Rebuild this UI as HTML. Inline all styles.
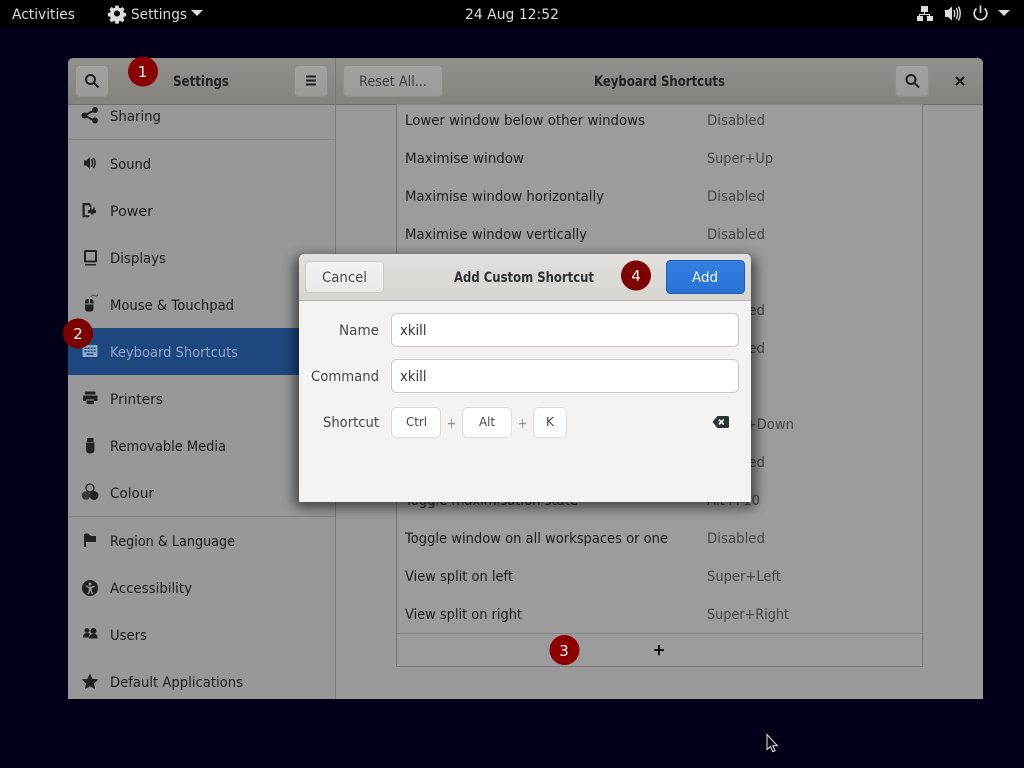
<!DOCTYPE html>
<html><head><meta charset="utf-8"><title>Settings</title>
<style>
html,body{margin:0;padding:0;width:1024px;height:768px;overflow:hidden;background:#000018}
svg{display:block}
text{font-family:"DejaVu Sans","Liberation Sans",sans-serif;font-size:14.5px;fill:#1c1c1c}
.top{fill:#dcdcdc;font-size:14.5px}
.s{fill:#1c1c1c}
.v{fill:#464646}
.b{font-weight:bold;fill:#222}
.d{fill:#2e3436}
.l{fill:#44484a}
.ic{fill:#222}
</style></head><body>
<svg width="1024" height="768" viewBox="0 0 1024 768" xmlns="http://www.w3.org/2000/svg">
<defs>
<linearGradient id="hb" x1="0" y1="0" x2="0" y2="1"><stop offset="0" stop-color="#92918c"/><stop offset="1" stop-color="#83827d"/></linearGradient>
<linearGradient id="btn" x1="0" y1="0" x2="0" y2="1"><stop offset="0" stop-color="#a3a29e"/><stop offset="1" stop-color="#9b9a96"/></linearGradient>
<linearGradient id="dh" x1="0" y1="0" x2="0" y2="1"><stop offset="0" stop-color="#e2e0dc"/><stop offset="1" stop-color="#d8d5d0"/></linearGradient>
<linearGradient id="dbtn" x1="0" y1="0" x2="0" y2="1"><stop offset="0" stop-color="#f4f3f1"/><stop offset="1" stop-color="#eae8e5"/></linearGradient>
<linearGradient id="add" x1="0" y1="0" x2="0" y2="1"><stop offset="0" stop-color="#3280e0"/><stop offset="1" stop-color="#2872d6"/></linearGradient>
<filter id="sh" x="-15%" y="-20%" width="130%" height="140%"><feGaussianBlur stdDeviation="6"/></filter>
</defs>

<rect width="1024" height="768" fill="#000018"/>
<rect width="1024" height="27" fill="#000"/>

<!-- top bar -->
<text class="top" x="12" y="19" textLength="63" lengthAdjust="spacingAndGlyphs">Activities</text>
<g fill="#dcdcdc" transform="translate(117,13.5)">
<path d="M-1.6-8h3.2l.4 2.2 1.5.6 1.9-1.3 2.2 2.2-1.3 1.9.6 1.5 2.2.4v3.2l-2.2.4-.6 1.500 1.3 1.900-2.200 2.200-1.900-1.300-1.500.6-.4 2.200h-3.200l-.4-2.200-1.500-.6-1.900 1.300-2.200-2.200 1.300-1.900-.6-1.500-2.200-.4v-3.200l2.200-.4.6-1.500-1.300-1.900 2.200-2.200 1.900 1.300 1.500-.6zM0-3a3 3 0 1 0 0 6 3 3 0 0 0 0-6z" fill-rule="evenodd"/>
</g>
<text class="top" x="131" y="19" textLength="56" lengthAdjust="spacingAndGlyphs">Settings</text>
<path d="M191 10h12l-6 6z" fill="#dcdcdc"/>
<text class="top" x="465" y="19" textLength="94" lengthAdjust="spacingAndGlyphs">24 Aug 12:52</text>
<!-- network -->
<g fill="#dcdcdc"><rect x="921" y="6" width="7" height="6"/><rect x="917" y="16" width="6" height="5"/><rect x="927" y="16" width="6" height="5"/><path d="M924 12h1v2h5v2h-1v-1h-9v1h-1v-2h5z"/></g>
<!-- volume -->
<path d="M945 10h3l4-3.500v14l-4-3.500h-3z" fill="#dcdcdc"/>
<path d="M954 10q1.500 3.500 0 7M956.300 8q2.700 5.500 0 11M958.500 6.500q3.500 7 0 14" fill="none" stroke="#dcdcdc" stroke-width="1.400"/>
<!-- power -->
<path d="M976.500 8.500a6.300 6.300 0 1 0 8 0M980.500 5.500v7.500" fill="none" stroke="#dcdcdc" stroke-width="1.700"/>
<path d="M998 10h12l-6 6z" fill="#dcdcdc"/>

<!-- window -->
<path d="M68 699V64q0-6 6-6h903q6 0 6 6v635z" fill="#9a9a9a"/>
<path d="M68 104V64q0-6 6-6h903q6 0 6 6v40z" fill="url(#hb)"/>
<rect x="68" y="104" width="915" height="1" fill="#6e6d69"/>
<rect x="335" y="58" width="1" height="641" fill="#7a7a77"/>

<!-- header buttons -->
<rect x="75.500" y="65.500" width="33" height="31" rx="4" fill="url(#btn)" stroke="#8d8c88"/>
<g fill="none" stroke="#1e1e1e" stroke-width="2"><circle cx="90.500" cy="79.500" r="4.500"/><path d="M94 83l4.500 4.500"/></g>
<text class="b" x="173" y="86" textLength="56" lengthAdjust="spacingAndGlyphs">Settings</text>
<rect x="294.500" y="65.500" width="33" height="31" rx="4" fill="url(#btn)" stroke="#8d8c88"/>
<path d="M306 75.500h10v2h-10zM306 79.500h10v2h-10zM306 83.500h10v2h-10z" fill="#1e1e1e"/>
<rect x="343.500" y="65.500" width="99" height="31" rx="4" fill="url(#btn)" stroke="#8d8c88"/>
<text class="l" x="359" y="86" textLength="68" lengthAdjust="spacingAndGlyphs" style="fill:#3a3d3f">Reset All...</text>
<text class="b" x="594" y="86" textLength="131" lengthAdjust="spacingAndGlyphs">Keyboard Shortcuts</text>
<rect x="895.500" y="65.500" width="33" height="31" rx="4" fill="url(#btn)" stroke="#8d8c88"/>
<g fill="none" stroke="#1e1e1e" stroke-width="2"><circle cx="911" cy="79.500" r="4.500"/><path d="M914.500 83l4.500 4.500"/></g>
<path d="M956 77l8 8M964 77l-8 8" stroke="#1e1e1e" stroke-width="2.200" fill="none"/>

<!-- sidebar -->
<rect x="68" y="105" width="267" height="594" fill="#989898"/>
<rect x="68" y="139" width="267" height="1" fill="#858585"/>
<rect x="68" y="516" width="267" height="1" fill="#858585"/>
<rect x="68" y="328" width="267" height="47" fill="#1e4780"/>

<text class="s" x="110" y="121" textLength="51" lengthAdjust="spacingAndGlyphs">Sharing</text>
<text class="s" x="110" y="169" textLength="41" lengthAdjust="spacingAndGlyphs">Sound</text>
<text class="s" x="110" y="216" textLength="43" lengthAdjust="spacingAndGlyphs">Power</text>
<text class="s" x="110" y="263" textLength="56" lengthAdjust="spacingAndGlyphs">Displays</text>
<text class="s" x="110" y="310" textLength="124" lengthAdjust="spacingAndGlyphs">Mouse &amp; Touchpad</text>
<text x="110" y="357" textLength="128" lengthAdjust="spacingAndGlyphs" style="fill:#8fa8c8">Keyboard Shortcuts</text>
<text class="s" x="110" y="404" textLength="53" lengthAdjust="spacingAndGlyphs">Printers</text>
<text class="s" x="110" y="451" textLength="116" lengthAdjust="spacingAndGlyphs">Removable Media</text>
<text class="s" x="110" y="498" textLength="44" lengthAdjust="spacingAndGlyphs">Colour</text>
<text class="s" x="110" y="546" textLength="125" lengthAdjust="spacingAndGlyphs">Region &amp; Language</text>
<text class="s" x="110" y="593" textLength="82" lengthAdjust="spacingAndGlyphs">Accessibility</text>
<text class="s" x="110" y="640" textLength="37" lengthAdjust="spacingAndGlyphs">Users</text>
<text class="s" x="110" y="687" textLength="133" lengthAdjust="spacingAndGlyphs">Default Applications</text>

<!-- sidebar icons -->
<g class="ic">
<!-- sharing -->
<path d="M95 110l-10.500 5.500 10.500 5.500" fill="none" stroke="#222" stroke-width="2"/>
<circle cx="84.500" cy="115.500" r="3"/><circle cx="95" cy="110" r="3"/><circle cx="95" cy="120.500" r="3"/>
<!-- sound -->
<path d="M84 160.500h2.500l3.500-3.500v12l-3.500-3.500H84z"/>
<path d="M91.500 159q2 4 0 8M93.500 158q3 5 0 10" fill="none" stroke="#222" stroke-width="1.500"/>
<!-- power -->
<path d="M82.500 203h7l2 2.500v1.500h-2.200v-1.800h-4.600v10h4.600v2h-6.800z"/>
<path d="M90 207.500h1.600v2h1.600v-2h1.600v2.500h1.200v3h-2.600v1.500h-2.600V213H88v-3h2z"/>
<!-- displays -->
<path d="M84 251.500q0-1.500 1.500-1.500h10q1.500 0 1.500 1.500V261q0 1.500-1.500 1.500h-10Q84 262.500 84 261zM86 252v8.500h9V252zM85 264h11v1.500H85z" fill-rule="evenodd"/>
<!-- mouse -->
<path d="M85 302q0-3 3-3h.8v4.500H85zM90 299h.5q3 0 3 3v1.500H90zM85 304.500h8.500v4q0 3-3 3H88q-3 0-3-3z"/>
<path d="M91 297q1.500-3 3.500-1.500t3.500-1" fill="none" stroke="#444" stroke-width=".9"/>
<!-- printer -->
<path d="M85 391.500h10.500v3H85zM83 395.500h14.500v5.500H94v-1.500h-8V401h-3zM86.500 400.500h7.500v3.500h-7.500z"/>
<!-- usb -->
<path d="M87 438h6.500v4H87zM86 442.500h8.500v7.500q0 3.500-4.250 3.500T86 450z"/>
<!-- colour -->
<circle cx="90" cy="488" r="4" fill="none" stroke="#222" stroke-width="1.300"/>
<circle cx="86" cy="495.500" r="4.300" fill="#3c3c3c"/><circle cx="94" cy="495.500" r="4.500"/>
<!-- flag -->
<path d="M84 534h2v13h-2z"/>
<path d="M85 533.500h3l3 2.500h5v6h-11z"/>
<!-- accessibility -->
<path d="M90 580a8 8 0 1 0 0 16 8 8 0 0 0 0-16zM90 582.500a1.500 1.500 0 1 1 0 3 1.500 1.500 0 0 1 0-3zM85.500 585.500l3 1h3l3-1 .3 1.200-3 1.300v2.500l1.300 3.500-1.200.4-1.400-3.400h-.4l-1.400 3.400-1.200-.4 1.300-3.500V588l-3-1.300z" fill-rule="evenodd"/>
<!-- users -->
<circle cx="87" cy="630.500" r="2.500"/><path d="M83 637.500q0-4.500 4-4.500 2 0 3 1-1.200 1.300-1.300 3.500z"/>
<circle cx="93.500" cy="631" r="3"/><path d="M89 638.500q0-4.500 4.500-4.500t4 4.500z"/>
<!-- star -->
<path d="M90 673.500l2.500 5.300 5.800.7-4.300 4 1.200 5.800-5.200-2.900-5.200 2.900 1.200-5.800-4.300-4 5.800-.7z"/>
</g>
<!-- keyboard icon -->
<path d="M82.500 346q0-1 1-1h13q1 0 1 1v10q0 1-1 1h-13q-1 0-1-1z" fill="#8fa8c8"/>
<path d="M84.500 347.500h2v1.500h-2zM87.500 347.500h2v1.500h-2zM90.500 347.500h2v1.500h-2zM93.500 347.500h2v1.500h-2zM84.500 350.500h2v1.500h-2zM87.500 350.500h2v1.500h-2zM90.500 350.500h2v1.500h-2zM93.500 350.500h2v1.500h-2zM86.500 353.500h7v1.500h-7z" fill="#1e4780"/>

<!-- content -->
<rect x="396.500" y="104" width="526" height="562.500" fill="#9c9c9c" stroke="#7a7a7a"/>
<rect x="397" y="633" width="525" height="1" fill="#858585"/>
<g>
<text class="s" x="405" y="125" textLength="240" lengthAdjust="spacingAndGlyphs">Lower window below other windows</text>
<text class="s" x="405" y="163" textLength="119" lengthAdjust="spacingAndGlyphs">Maximise window</text>
<text class="s" x="405" y="201" textLength="199" lengthAdjust="spacingAndGlyphs">Maximise window horizontally</text>
<text class="s" x="405" y="239" textLength="182" lengthAdjust="spacingAndGlyphs">Maximise window vertically</text>
<text class="s" x="405" y="505" textLength="173" lengthAdjust="spacingAndGlyphs">Toggle maximisation state</text>
<text class="s" x="405" y="543" textLength="263" lengthAdjust="spacingAndGlyphs">Toggle window on all workspaces or one</text>
<text class="s" x="405" y="581" textLength="108" lengthAdjust="spacingAndGlyphs">View split on left</text>
<text class="s" x="405" y="619" textLength="117" lengthAdjust="spacingAndGlyphs">View split on right</text>
<text class="v" x="707" y="125" textLength="58" lengthAdjust="spacingAndGlyphs">Disabled</text>
<text class="v" x="707" y="163" textLength="66" lengthAdjust="spacingAndGlyphs">Super+Up</text>
<text class="v" x="707" y="201" textLength="58" lengthAdjust="spacingAndGlyphs">Disabled</text>
<text class="v" x="707" y="239" textLength="58" lengthAdjust="spacingAndGlyphs">Disabled</text>
<text class="v" x="707" y="315" textLength="58" lengthAdjust="spacingAndGlyphs">Disabled</text>
<text class="v" x="707" y="353" textLength="58" lengthAdjust="spacingAndGlyphs">Disabled</text>
<text class="v" x="707" y="429" textLength="87" lengthAdjust="spacingAndGlyphs">Super+Down</text>
<text class="v" x="707" y="467" textLength="58" lengthAdjust="spacingAndGlyphs">Disabled</text>
<text class="v" x="707" y="505" textLength="53" lengthAdjust="spacingAndGlyphs">Alt+F10</text>
<text class="v" x="707" y="543" textLength="58" lengthAdjust="spacingAndGlyphs">Disabled</text>
<text class="v" x="707" y="581" textLength="74" lengthAdjust="spacingAndGlyphs">Super+Left</text>
<text class="v" x="707" y="619" textLength="82" lengthAdjust="spacingAndGlyphs">Super+Right</text>
</g>
<path d="M654 649.200h10v1.800h-10zM658.100 645.200h1.800v10h-1.800z" fill="#000"/>

<!-- dialog -->
<rect x="294" y="256" width="462" height="252" rx="8" fill="#000" opacity=".55" filter="url(#sh)"/>
<path d="M299 502V260q0-6 6-6h440q6 0 6 6v242z" fill="#f4f3f2"/>
<path d="M299 300V260q0-6 6-6h440q6 0 6 6v40z" fill="url(#dh)"/>
<rect x="299" y="300" width="452" height="1" fill="#b4b0aa"/>

<rect x="305.500" y="261.500" width="78" height="31" rx="4" fill="url(#dbtn)" stroke="#cdc9c3"/>
<text class="l" x="322" y="282" textLength="45" lengthAdjust="spacingAndGlyphs">Cancel</text>
<text class="b" x="454" y="282" textLength="140" lengthAdjust="spacingAndGlyphs" style="fill:#2e3234">Add Custom Shortcut</text>
<rect x="666.500" y="260.500" width="78" height="33" rx="4" fill="url(#add)" stroke="#1c5fb8"/>
<text x="692" y="282" textLength="26" lengthAdjust="spacingAndGlyphs" style="fill:#f4f8fd">Add</text>

<text class="l" x="339" y="335" textLength="40" lengthAdjust="spacingAndGlyphs">Name</text>
<rect x="391.500" y="313.500" width="347" height="33" rx="5" fill="#fff" stroke="#cdc9c3"/>
<text class="d" x="400" y="335" textLength="26.500" lengthAdjust="spacingAndGlyphs">xkill</text>
<text class="l" x="311" y="381" textLength="68" lengthAdjust="spacingAndGlyphs">Command</text>
<rect x="391.500" y="359.500" width="347" height="33" rx="5" fill="#fff" stroke="#cdc9c3"/>
<text class="d" x="400" y="381" textLength="26.500" lengthAdjust="spacingAndGlyphs">xkill</text>
<text class="l" x="323" y="427" textLength="56" lengthAdjust="spacingAndGlyphs">Shortcut</text>

<rect x="391.500" y="407.500" width="49" height="30" rx="5" fill="#fff" stroke="#dedbd7"/>
<text class="l" x="406" y="426" textLength="21" lengthAdjust="spacingAndGlyphs" style="font-size:12px">Ctrl</text>
<text class="l" x="447" y="428" textLength="9" lengthAdjust="spacingAndGlyphs" style="fill:#8a8e8f">+</text>
<rect x="462.500" y="407.500" width="49" height="30" rx="5" fill="#fff" stroke="#dedbd7"/>
<text class="l" x="479" y="426" textLength="16" lengthAdjust="spacingAndGlyphs" style="font-size:12px">Alt</text>
<text class="l" x="518" y="428" textLength="9" lengthAdjust="spacingAndGlyphs" style="fill:#8a8e8f">+</text>
<rect x="533.500" y="407.500" width="33" height="30" rx="5" fill="#fff" stroke="#dedbd7"/>
<text class="l" x="546" y="426" textLength="8" lengthAdjust="spacingAndGlyphs" style="font-size:12px">K</text>
<path d="M717.500 416h10q1.500 0 1.500 1.500v9q0 1.500-1.500 1.500h-10l-5-6zM719.500 419l-1.200 1.200 1.800 1.800-1.800 1.800 1.200 1.200 1.800-1.800 1.800 1.800 1.200-1.200-1.800-1.800 1.800-1.800-1.200-1.200-1.800 1.800z" fill="#2e3436" fill-rule="evenodd"/>

<!-- badges -->
<circle cx="143" cy="71.500" r="15" fill="#8a0000"/>
<text x="142.500" y="77" text-anchor="middle" style="fill:#f4f4f4;font-size:15px">1</text>
<circle cx="78" cy="333.500" r="15" fill="#7c0000"/>
<text x="78" y="339" text-anchor="middle" style="fill:#f4f4f4;font-size:15px">2</text>
<circle cx="564.500" cy="650" r="15" fill="#8e0000"/>
<text x="564" y="656" text-anchor="middle" style="fill:#f4f4f4;font-size:15px">3</text>
<circle cx="636" cy="275.500" r="15" fill="#7c0000"/>
<text x="636" y="281" text-anchor="middle" style="fill:#f4f4f4;font-size:15px">4</text>

<!-- cursor -->
<path d="M767 734.500v15l3.500-3 2.300 5.200 2.300-1-2.300-5h4.500z" fill="#0c0c0c" stroke="#e8e8e8" stroke-width="1"/>
</svg>
</body></html>
